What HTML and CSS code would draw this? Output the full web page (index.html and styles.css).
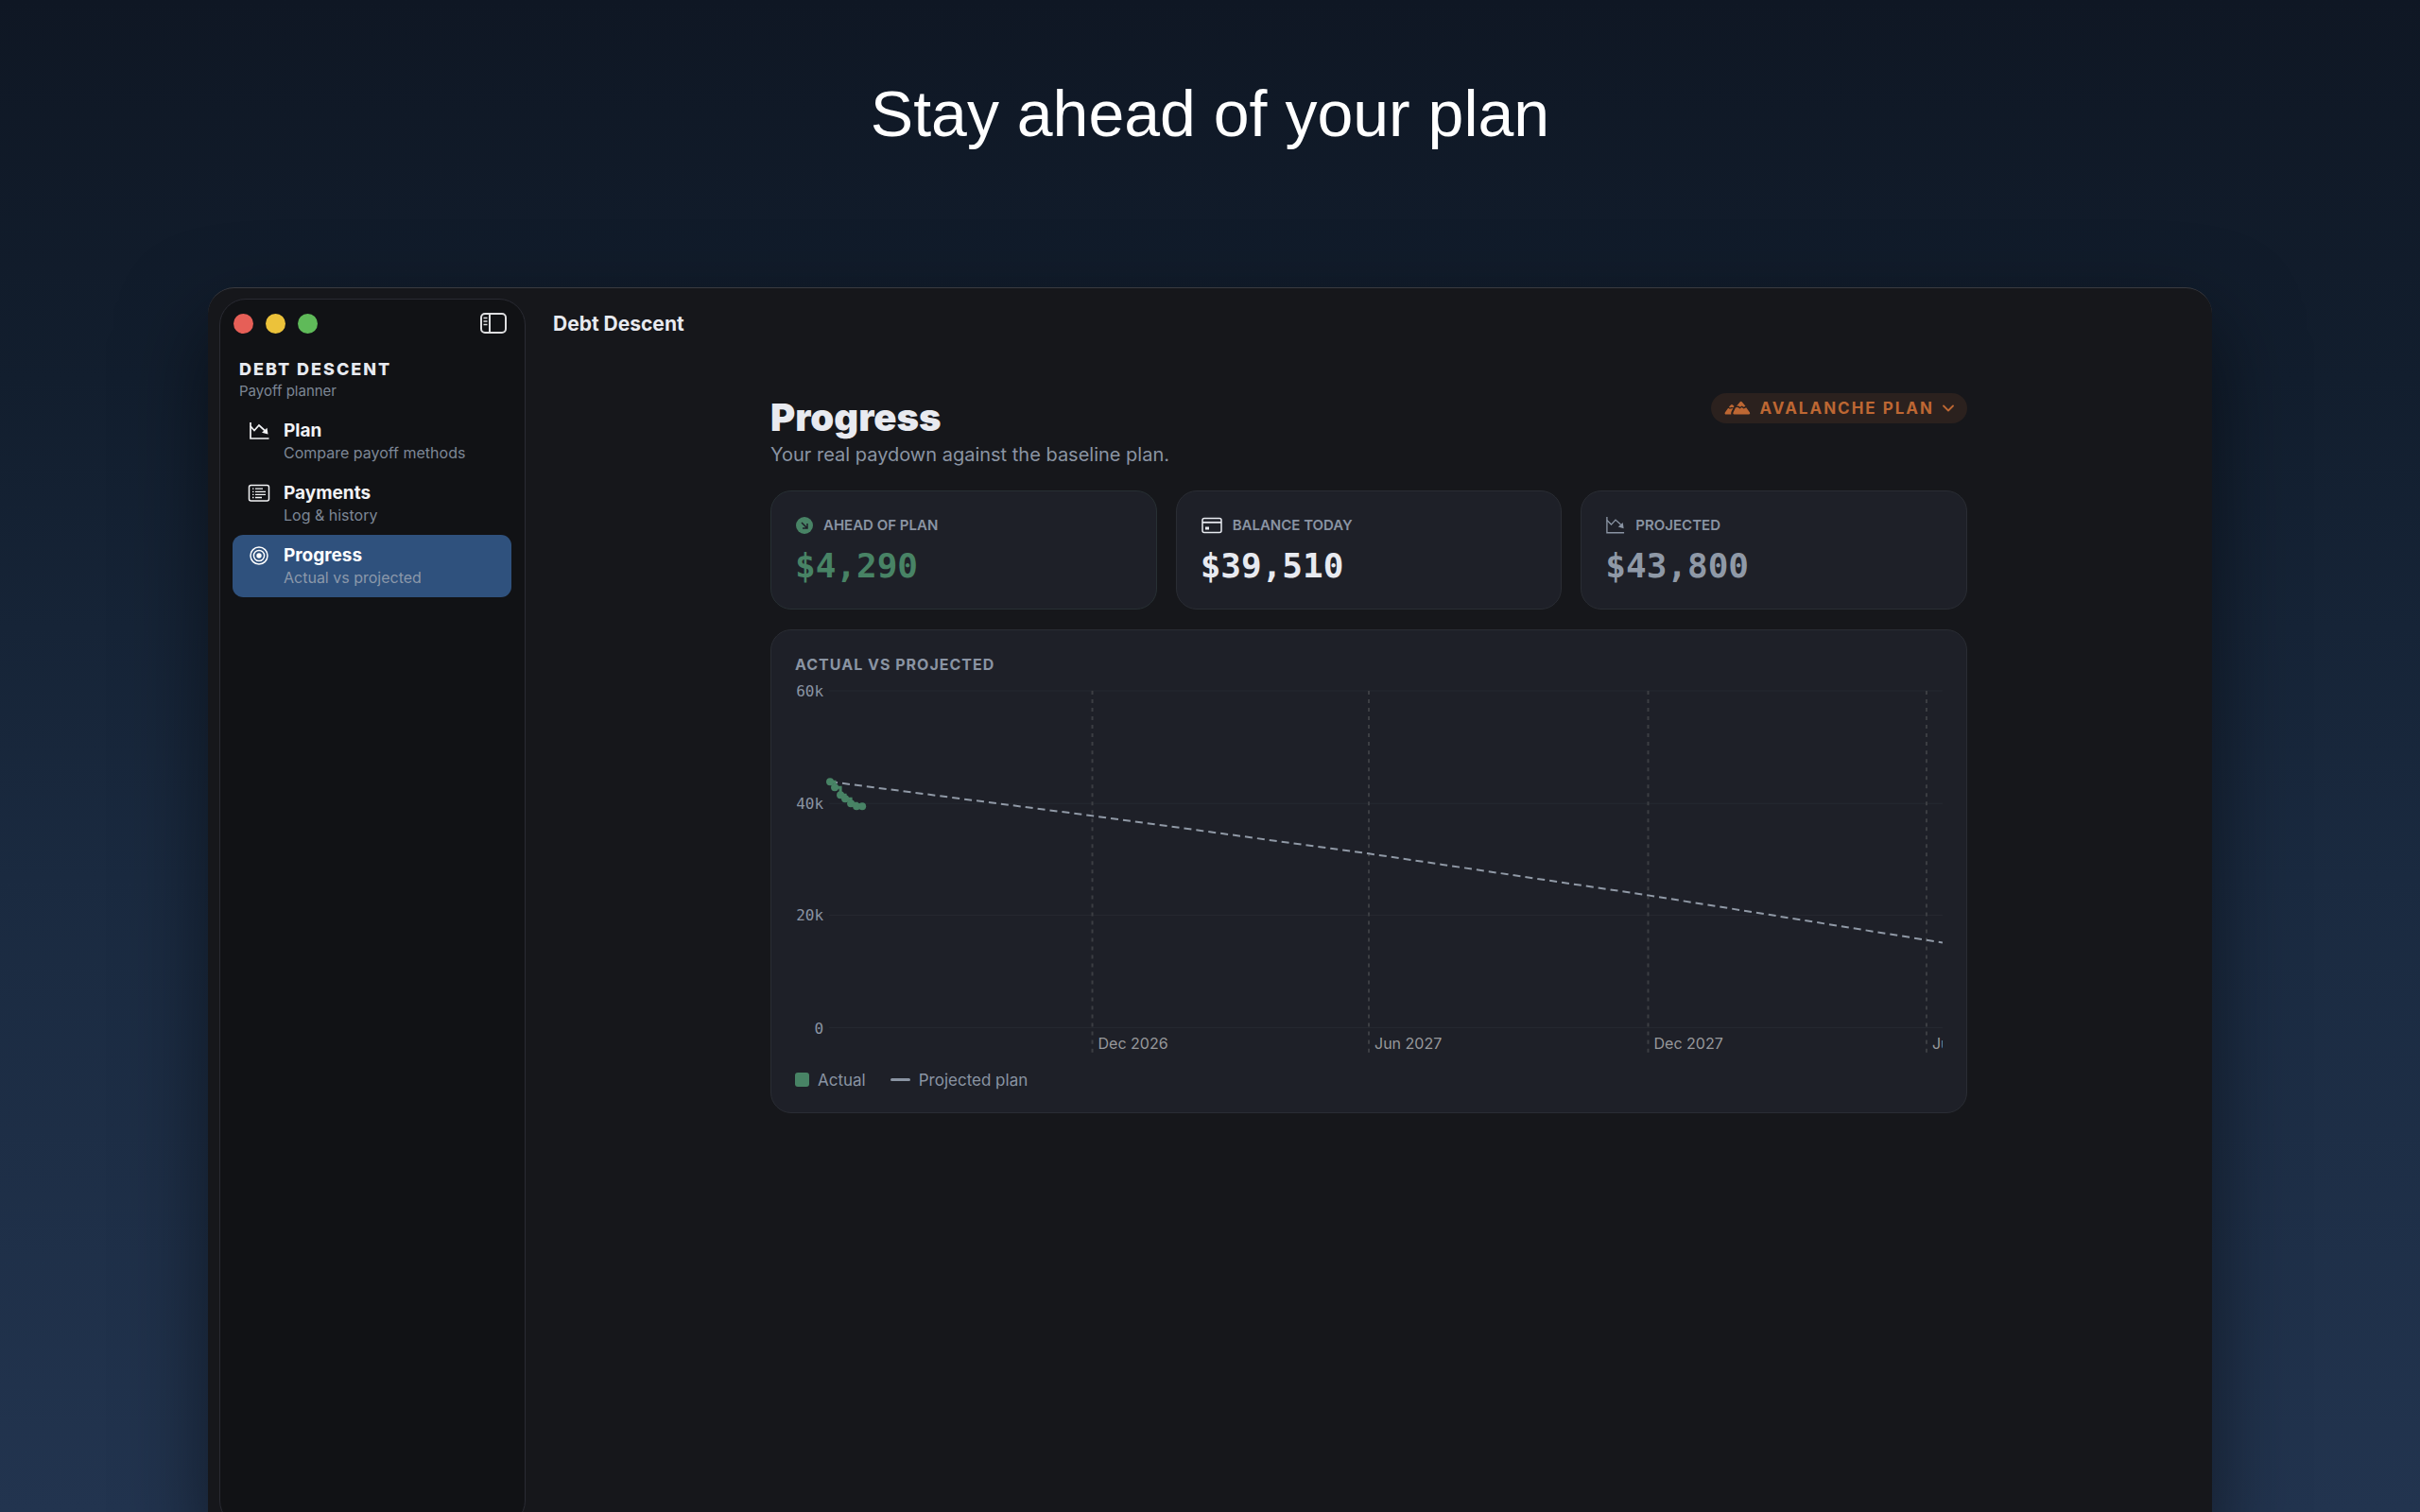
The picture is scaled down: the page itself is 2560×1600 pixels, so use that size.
FILE: index.html
```html
<!DOCTYPE html>
<html lang="en">
<head>
    <meta charset="UTF-8">
    <title>Debt Descent</title>
    <link rel="stylesheet" href="styles.css">
</head>
<body>
<h1 class="headline">Stay ahead of your plan</h1>
<div class="window">
    <nav class="sidebar">
        <div class="controls">
            <button class="dot red" aria-label="Close"></button>
            <button class="dot yellow" aria-label="Minimize"></button>
            <button class="dot green" aria-label="Zoom"></button>
            <button class="toggle" aria-label="Toggle sidebar">
                <svg width="30" height="24" viewBox="0 0 30 24" fill="none" stroke="currentColor">
                    <rect x="2" y="2" width="26" height="20" rx="4" stroke-width="2"/>
                    <path d="M11 2v20" stroke-width="2"/>
                    <path d="M4.500 6.500h4M4.500 10h4M4.500 13.500h4" stroke-width="1.500"/>
                </svg>
            </button>
        </div>
        <div class="brand">
            <strong>DEBT DESCENT</strong>
            <span>Payoff planner</span>
        </div>
        <a class="item" href="#plan">
            <svg width="24" height="24" viewBox="0 0 24 24" fill="none" stroke="currentColor" stroke-width="1.700">
                <path d="M3 3v17h19.500"/>
                <path d="M3 7l4 4.500 5-5.500 6 5.500"/>
                <path d="M21.500 15.500l-6.500-1.800 5.500-5z" fill="currentColor" stroke="none"/>
            </svg>
            <span class="text"><b>Plan</b><small>Compare payoff methods</small></span>
        </a>
        <a class="item" href="#payments">
            <svg width="24" height="24" viewBox="0 0 24 24" fill="none" stroke="currentColor" stroke-width="1.500">
                <rect x="1.500" y="3.500" width="21" height="16.500" rx="2"/>
                <path d="M5 7.200h1.500M5 10.300h1.500M5 13.400h1.500M5 16.500h1.500M8 7.200h8M8 10.300h11M8 13.400h11M8 16.500h7" stroke-width="1.300"/>
            </svg>
            <span class="text"><b>Payments</b><small>Log &amp; history</small></span>
        </a>
        <a class="item active" href="#progress">
            <svg width="24" height="24" viewBox="0 0 24 24" fill="none" stroke="currentColor" stroke-width="1.500">
                <circle cx="12" cy="12" r="9"/>
                <circle cx="12" cy="12" r="5.600"/>
                <circle cx="12" cy="12" r="2.700" fill="currentColor" stroke="none"/>
            </svg>
            <span class="text"><b>Progress</b><small>Actual vs projected</small></span>
        </a>
    </nav>
    <main class="main">
        <div class="toolbar">Debt Descent</div>
        <div class="content">
            <div class="head">
                <div>
                    <h2>Progress</h2>
                    <p>Your real paydown against the baseline plan.</p>
                </div>
                <button class="pill">
                    <svg width="28" height="16" viewBox="0 0 28 16" fill="currentColor">
                        <path d="M13 5.800L16.500 1.500q1.200-1.400 2.400 0l3.600 4.300-1.800 1-2-1.200-2 1.200-1.700-1.200z"/>
                        <path d="M12 7.200l2.500-.2 2 1.400 2-1.300 2.200 1.300 2.500-1.200L27 12.400q.8 2-1 2H10.500q-1.800 0-1-2z"/>
                        <path d="M5 6.600L7 4.500q1-1 2 0l1.600 1.500-1 1.200-2-.3-1.800 .6z"/>
                        <path d="M4.200 7.800l1.600 1 3.600-.8-1.800 3.600q-.7 1.600-.3 2.800H2q-2 0-1.200-2z"/>
                    </svg>
                    AVALANCHE PLAN
                    <svg width="12" height="8" viewBox="0 0 12 8" fill="none" stroke="currentColor" stroke-width="1.800" stroke-linecap="round" stroke-linejoin="round"><path d="M1 1.500l5 5 5-5"/></svg>
                </button>
            </div>
            <div class="cards">
                <section class="card ahead">
                    <h3>
                        <svg width="20" height="20" viewBox="0 0 20 20" fill="none">
                            <circle cx="10" cy="10" r="9" fill="currentColor"/>
                            <path d="M7 7l6 6M13 8v5H8" stroke="#1e2028" stroke-width="1.500"/>
                        </svg>
                        AHEAD OF PLAN
                    </h3>
                    <div class="amount">$4,290</div>
                </section>
                <section class="card balance">
                    <h3>
                        <svg width="24" height="20" viewBox="0 0 24 20" fill="none" stroke="currentColor" stroke-width="1.500">
                            <rect x="2" y="2.500" width="20" height="15" rx="2"/>
                            <path d="M2 6.800h20" stroke-width="1.800"/>
                            <rect x="5" y="11.500" width="4" height="3" fill="currentColor" stroke="none"/>
                        </svg>
                        BALANCE TODAY
                    </h3>
                    <div class="amount">$39,510</div>
                </section>
                <section class="card projected">
                    <h3>
                        <svg width="22" height="20" viewBox="0 0 24 22" fill="none" stroke="currentColor" stroke-width="1.500">
                            <path d="M2 1v18.500h20"/>
                            <path d="M2 5l5 5 5-5.500 6 5.500"/>
                            <path d="M21.500 14.500l-6.500-1.800 5.500-5z" fill="currentColor" stroke="none"/>
                        </svg>
                        PROJECTED
                    </h3>
                    <div class="amount">$43,800</div>
                </section>
            </div>
            <section class="card chart">
                <h3>ACTUAL VS PROJECTED</h3>
                <svg class="plot" viewBox="0 0 1212 404">
                    <g class="grid">
                        <path d="M36 15h1176M36 134h1176M36 252h1176M36 371h1176"/>
                    </g>
                    <g class="months">
                        <path d="M314 15v383M606 15v383M901 15v383M1195 15v383"/>
                    </g>
                    <g class="values">
                        <text x="30" y="21">60k</text>
                        <text x="30" y="140">40k</text>
                        <text x="30" y="258">20k</text>
                        <text x="30" y="377">0</text>
                    </g>
                    <g class="dates">
                        <text x="320" y="393">Dec 2026</text>
                        <text x="612" y="393">Jun 2027</text>
                        <text x="907" y="393">Dec 2027</text>
                        <text x="1201" y="393">Jun 2028</text>
                    </g>
                    <path class="plan-line" d="M37 111L314 147 606 187 901 231 1212 281"/>
                    <path class="actual-line" d="M37 111h5v6h6v8h5v4h6v5h6v3h6"/>
                    <g class="points">
                        <circle cx="37" cy="111" r="4"/>
                        <circle cx="42" cy="117" r="4"/>
                        <circle cx="48" cy="125" r="4"/>
                        <circle cx="53" cy="129" r="4"/>
                        <circle cx="59" cy="134" r="4"/>
                        <circle cx="65" cy="137" r="4"/>
                        <circle cx="71" cy="137" r="4"/>
                    </g>
                </svg>
                <div class="legend">
                    <span class="key"><i class="square"></i>Actual</span>
                    <span class="key"><i class="dash"></i>Projected plan</span>
                </div>
            </section>
        </div>
    </main>
</div>
</body>
</html>
```
FILE: styles.css
```css
*{
    margin: 0;
    padding: 0;
    box-sizing: border-box;
}
body{
    height: 100vh;
    overflow: hidden;
    background: linear-gradient(#0f1724, #121e2e 25%, #1a2a40 58%, #22344f);
    color: #e8eaf0;
    font-family: Inter, "Liberation Sans", sans-serif;
}
button{
    border: 0;
    background: none;
    color: inherit;
    font: inherit;
}
svg{
    flex: none;
}
.headline{
    padding-top: 74px;
    height: 304px;
    font-family: "Liberation Sans", Arial, sans-serif;
    font-size: 68px;
    line-height: 92px;
    font-weight: 400;
    text-align: center;
    color: #fff;
}
.window{
    display: flex;
    height: 1323px;
    margin: 0 220px;
    padding: 11px 0 11px 12px;
    border-top: 1px solid #3a3b40;
    border-radius: 28px 28px 0 0;
    background: #16171b;
    box-shadow: 0 36px 90px rgba(0,0,0,0.5);
}
.sidebar{
    width: 324px;
    padding: 0 14px 0 13px;
    border: 1px solid #2a2b33;
    border-radius: 28px;
    background: #111215;
}
.controls{
    display: flex;
    align-items: center;
    gap: 13px;
    height: 50px;
    padding: 0 4px 0 1px;
}
.dot{
    width: 21px;
    height: 21px;
    border-radius: 50%;
}
.red{
    background: #e65f57;
}
.yellow{
    background: #ecc23a;
}
.green{
    background: #5fba59;
}
.toggle{
    display: flex;
    margin-left: auto;
    color: #dedee0;
}
.brand{
    display: flex;
    flex-direction: column;
    padding: 13px 7px 8px;
}
.brand strong{
    font-size: 18px;
    line-height: 22px;
    font-weight: 800;
    letter-spacing: 2px;
}
.brand span{
    font-size: 15px;
    line-height: 24px;
    color: #7d8796;
}
.item{
    display: flex;
    gap: 14px;
    height: 66px;
    padding: 10px 16px;
    border-radius: 11px;
    color: #f2f3f5;
    text-decoration: none;
}
.text{
    display: flex;
    flex-direction: column;
}
.text b{
    font-size: 19px;
    line-height: 24px;
    font-weight: 700;
}
.text small{
    font-size: 16px;
    line-height: 22px;
    color: #7d8796;
}
.active{
    background: #2f517d;
    color: #fff;
}
.active small{
    color: #8b98aa;
}
.main{
    flex: 1;
}
.toolbar{
    padding-left: 29px;
    font-size: 21px;
    line-height: 54px;
    font-weight: 700;
}
.content{
    max-width: 1266px;
    margin: 0 auto;
    padding-top: 46px;
}
.head{
    display: flex;
    justify-content: space-between;
    align-items: flex-start;
    height: 103px;
}
.head h2{
    font-size: 40px;
    line-height: 52px;
    font-weight: 900;
}
.head p{
    font-size: 20px;
    line-height: 26px;
    color: #8a94a3;
}
.pill{
    display: flex;
    align-items: center;
    gap: 9px;
    height: 32px;
    padding: 0 14px;
    border-radius: 16px;
    background: #2b211e;
    color: #bd6733;
    font-size: 17px;
    font-weight: 700;
    letter-spacing: 2px;
}
.cards{
    display: grid;
    grid-template-columns: repeat(3, 1fr);
    gap: 20px;
    margin-bottom: 21px;
}
.card{
    padding: 26px 25px 22px;
    border: 1px solid #2a2d34;
    border-radius: 22px;
    background: #1e2028;
}
.card h3{
    display: flex;
    align-items: center;
    gap: 10px;
    font-size: 15px;
    line-height: 20px;
    font-weight: 600;
    color: #8a94a3;
}
.amount{
    margin-top: 10px;
    font-family: "DejaVu Sans Mono", monospace;
    font-size: 36px;
    line-height: 46px;
    font-weight: 700;
}
.ahead{
    border-color: #283034;
}
.ahead svg, .ahead .amount{
    color: #488365;
}
.balance svg, .balance .amount{
    color: #e8eaf0;
}
.projected .amount{
    color: #8f99a7;
}
.chart h3{
    font-size: 16px;
    font-weight: 700;
    letter-spacing: 1px;
}
.plot{
    display: block;
    width: 100%;
    margin-top: 3px;
    fill: none;
}
.grid{
    stroke: #252830;
    stroke-width: 1;
}
.months{
    stroke: #3c3e43;
    stroke-width: 2;
    stroke-dasharray: 4 5;
}
.values{
    fill: #8a94a3;
    font-family: "DejaVu Sans Mono", monospace;
    font-size: 16px;
    text-anchor: end;
}
.dates{
    fill: #97989b;
    font-size: 16px;
}
.plan-line{
    stroke: #9099a6;
    stroke-width: 2;
    stroke-dasharray: 8 5;
}
.actual-line{
    stroke: #488365;
    stroke-width: 3;
}
.points{
    fill: #488365;
}
.legend{
    display: flex;
    gap: 26px;
    margin-top: 10px;
    font-size: 17px;
    line-height: 24px;
    color: #8a94a3;
}
.key{
    display: flex;
    align-items: center;
    gap: 9px;
}
.square{
    width: 15px;
    height: 15px;
    border-radius: 3px;
    background: #488365;
}
.dash{
    width: 21px;
    height: 3px;
    border-radius: 2px;
    background: #8a94a3;
}
```
